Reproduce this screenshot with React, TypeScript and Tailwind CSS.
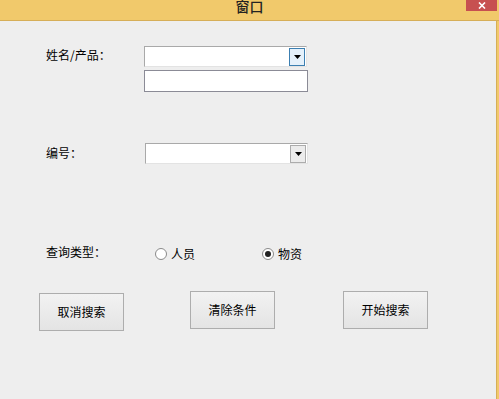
const font = { fontFamily: '"Microsoft YaHei", "Noto Sans CJK SC", sans-serif' }

function Arrow() {
  return (
    <svg width="7" height="4" viewBox="0 0 7 4">
      <path d="M0 0h7L3.5 4z" fill="#000" />
    </svg>
  )
}

function Combo({ active }: { active?: boolean }) {
  return (
    <div className="flex h-[21px] w-[163px] items-center border border-[#a9a9a9] border-b-[#e3e3e3] border-r-[#e3e3e3] bg-white pr-[1px]">
      <div className="flex-1" />
      <div
        className={
          active
            ? "flex h-[18px] w-[16px] items-center justify-center border border-[#3c7fb1] bg-[#e5f1fb]"
            : "flex h-[18px] w-[16px] items-center justify-center border border-[#acacac] bg-[#ececec]"
        }
      >
        <Arrow />
      </div>
    </div>
  )
}

function Radio({ checked, label }: { checked?: boolean; label: string }) {
  return (
    <div className="flex items-center gap-[4px]">
      <div className="flex h-[12px] w-[12px] items-center justify-center rounded-full border border-[#8a8a8a] bg-white">
        {checked && <div className="h-[6px] w-[6px] rounded-full bg-[#222]" />}
      </div>
      <span className="text-[12px] leading-[12px] text-black">{label}</span>
    </div>
  )
}

function Btn({ label, className }: { label: string; className?: string }) {
  return (
    <div
      className={
        "flex h-[38px] w-[85px] items-center justify-center border border-[#adadad] bg-gradient-to-b from-[#f2f2f2] to-[#e4e4e4] text-[12px] text-black " +
        (className ?? "")
      }
    >
      {label}
    </div>
  )
}

export default function App() {
  return (
    <div className="flex h-[399px] w-[499px] flex-col overflow-hidden bg-[#f1c96b]" style={font}>
      <div className="relative h-[21px] border-b border-[#d6ae58]">
        <div className="absolute left-0 right-0 top-[-2px] text-center text-[14px] font-medium leading-[16px] text-[#222]">
          窗口
        </div>
        <div className="absolute right-[2px] top-0 flex h-[11px] w-[31px] items-center justify-center bg-[#c75050]">
          <svg width="8" height="7" viewBox="0 0 8 7">
            <path d="M1 0.5l6 6M7 0.5l-6 6" stroke="#fff" strokeWidth="1.6" />
          </svg>
        </div>
      </div>
      <div className="mr-[2px] flex flex-1 flex-col border-r border-[#d6ae58] bg-[#eeeeee] pl-[39px] text-black">
        <div className="mt-[25px] flex">
          <div className="ml-[7px] w-[98px] pt-[3px] text-[12px] leading-[12px]">姓名/产品：</div>
          <div className="flex flex-col">
            <Combo active />
            <div className="mt-[3px] h-[22px] w-[164px] border border-[#8b8b96] bg-white" />
          </div>
        </div>
        <div className="mt-[51px] flex">
          <div className="ml-[7px] w-[99px] pt-[4px] text-[12px] leading-[12px]">编号：</div>
          <Combo />
        </div>
        <div className="mt-[81px] flex">
          <div className="ml-[7px] w-[109px] pt-[1px] text-[12px] leading-[12px]">查询类型：</div>
          <div className="flex pt-[3px]">
            <div className="w-[107px]">
              <Radio label="人员" />
            </div>
            <Radio checked label="物资" />
          </div>
        </div>
        <div className="mt-[31px] flex items-start">
          <Btn label="取消搜索" className="mt-[2px]" />
          <Btn label="清除条件" className="ml-[66px]" />
          <Btn label="开始搜索" className="ml-[68px]" />
        </div>
      </div>
    </div>
  )
}
